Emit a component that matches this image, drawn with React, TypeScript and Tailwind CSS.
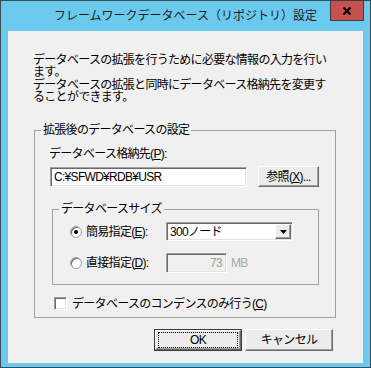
import React from 'react';

const sunken = "border border-t-[#a0a0a0] border-l-[#a0a0a0] border-b-white border-r-white shadow-[inset_1px_1px_0_#696969,inset_-1px_-1px_0_#e3e3e3]";
const raised = "bg-[#ececec] border border-t-white border-l-white border-b-[#696969] border-r-[#696969] shadow-[inset_-1px_-1px_0_#a0a0a0]";

const IconClose = () => (
    <svg width="8" height="8" viewBox="0 0 8 8"><path d="M0.5 0.5L7.5 7.5M7.5 0.5L0.5 7.5" stroke="#000" strokeWidth="2.2" /></svg>
);

const Radio = ({ checked }: { checked?: boolean }) => (
    <span className="w-[12px] h-[12px] rounded-full bg-white border border-[#a0a0a0] shadow-[inset_1px_1px_0_#696969] flex items-center justify-center shrink-0">
        {checked && <span className="w-[4px] h-[4px] rounded-full bg-black" />}
    </span>
);

const Mn = ({ k }: { k: string }) => (<>(<span className="underline">{k}</span>)</>);

export default function App() {
    return (
        <div className="relative w-[371px] h-[368px] bg-[#6cc9ee] border border-[#3b4b53] flex flex-col text-black font-['Liberation_Sans','Noto_Sans_CJK_JP',sans-serif]">
            <div className="h-[30px] flex items-center justify-center text-[12px] leading-[12px] text-[#1a1a1a]">
                フレームワークデータベース（リポジトリ）設定
            </div>
            <button className="absolute top-[-1px] right-[6px] w-[34px] h-[21px] bg-[#c75050] border border-[#3c3c3c] flex items-center justify-center">
                <IconClose />
            </button>

            <div className="flex-1 mx-[7px] mb-[4px] bg-[#f0f0f0] flex flex-col pt-[23px] text-[12px] leading-[12px] tracking-[-0.7px]">
                <p className="pl-[25px] whitespace-nowrap leading-[12.3px]">
                    データベースの拡張を行うために必要な情報の入力を行い<br />
                    ます。<br />
                    データベースの拡張と同時にデータベース格納先を変更す<br />
                    ることができます。
                </p>

                <fieldset className="ml-[26px] mt-[21px] w-[302px] border border-[#a0a0a0] pb-[7px]">
                    <legend className="ml-[6px] px-[2px] leading-[12px]">拡張後のデータベースの設定</legend>
                    <div className="pl-[14px]">
                        <div className="mt-[12px] whitespace-nowrap">データベース格納先<Mn k="P" />:</div>
                        <div className="mt-[6px] flex items-center h-[21px]">
                            <div className={`ml-[1px] w-[197px] h-[20px] bg-white ${sunken} flex items-center pl-[3px]`}>C:¥SFWD¥RDB¥USR</div>
                            <button className={`ml-[11px] w-[61px] h-[21px] ${raised} flex items-center justify-center`}>参照<Mn k="X" />...</button>
                        </div>

                        <fieldset className="ml-[3px] mt-[16px] w-[267px] border border-[#a0a0a0] pb-[11px]">
                            <legend className="ml-[6px] px-[2px] leading-[12px]">データベースサイズ</legend>
                            <div className="pl-[17px]">
                                <div className="mt-[7px] flex items-center h-[19px]">
                                    <Radio checked />
                                    <span className="ml-[4px] w-[80px] whitespace-nowrap">簡易指定<Mn k="E" />:</span>
                                    <div className={`w-[127px] h-[19px] bg-white ${sunken} flex items-center`}>
                                        <span className="flex-1 pl-[3px]">300ノード</span>
                                        <span className={`w-[16px] h-[15px] mr-[1px] ${raised} flex items-center justify-center`}>
                                            <svg width="7" height="4" viewBox="0 0 7 4"><path d="M0 0H7L3.5 4Z" fill="#000" /></svg>
                                        </span>
                                    </div>
                                </div>
                                <div className="mt-[12px] flex items-center h-[20px]">
                                    <Radio />
                                    <span className="ml-[4px] w-[80px] whitespace-nowrap">直接指定<Mn k="D" />:</span>
                                    <div className={`w-[61px] h-[20px] bg-[#f0f0f0] ${sunken} flex items-center justify-end pr-[4px] text-[#9a9a9a]`}>73</div>
                                    <span className="ml-[4px] text-[#a8a8a8]">MB</span>
                                </div>
                            </div>
                        </fieldset>

                        <div className="mt-[12px] ml-[5px] flex items-center h-[13px]">
                            <span className={`w-[13px] h-[13px] bg-white ${sunken}`} />
                            <span className="ml-[5px] whitespace-nowrap">データベースのコンデンスのみ行う<Mn k="C" /></span>
                        </div>
                    </div>
                </fieldset>

                <div className="mt-[11px] flex justify-end gap-[3px] pr-[30px]">
                    <button className="w-[88px] h-[22px] border border-[#3c3c3c] p-0">
                        <span className={`w-full h-full ${raised} flex items-center justify-center`}>
                            <span className="w-[80px] h-[16px] border border-dotted border-black flex items-center justify-center">OK</span>
                        </span>
                    </button>
                    <button className={`w-[88px] h-[22px] ${raised} flex items-center justify-center`}>キャンセル</button>
                </div>
            </div>
        </div>
    );
}
